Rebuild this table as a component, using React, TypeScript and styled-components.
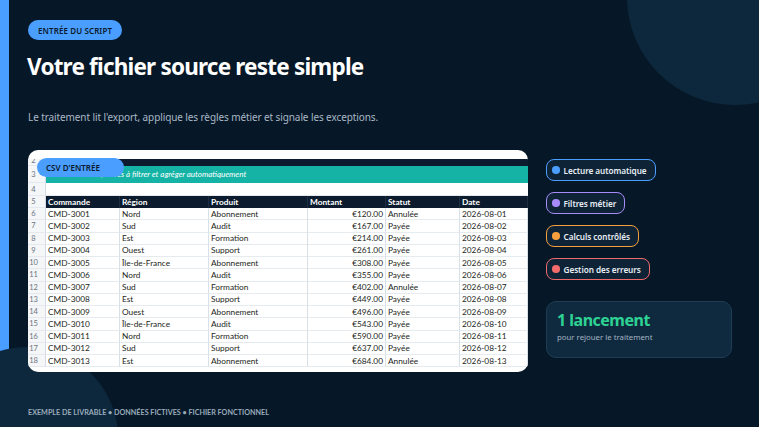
import React from "react";
import styled, { createGlobalStyle } from "styled-components";

const Global = createGlobalStyle`
  html, body { margin: 0; padding: 0; background: #061827; }
  * { box-sizing: border-box; }
`;

const Page = styled.div`
  position: relative;
  width: 759px;
  height: 427px;
  overflow: hidden;
  background: #061827;
  font-family: "Noto Sans", "Open Sans", sans-serif;
`;

const Bar = styled.div`
  position: absolute;
  left: 0;
  top: 0;
  width: 9px;
  height: 100%;
  background: #4a9eff;
`;

const Circle = styled.div<{ $x: number; $y: number; $r: number }>`
  position: absolute;
  left: ${(p) => p.$x - p.$r}px;
  top: ${(p) => p.$y - p.$r}px;
  width: ${(p) => p.$r * 2}px;
  height: ${(p) => p.$r * 2}px;
  border-radius: 50%;
  background: #0d283d;
`;

const Content = styled.div`
  position: relative;
  z-index: 1;
  display: flex;
  flex-direction: column;
  align-items: flex-start;
  padding: 20px 0 0 28px;
`;

const Badge = styled.div`
  height: 20px;
  padding: 0 10px;
  border-radius: 10px;
  background: #4a9eff;
  color: #0a1a2c;
  font-size: 8px;
  font-weight: 600;
  letter-spacing: 0.1px;
  display: flex;
  align-items: center;
`;

const Title = styled.h1`
  margin: 12px 0 0 -1px;
  font-size: 22.5px;
  line-height: 30px;
  font-weight: 700;
  color: #ffffff;
  letter-spacing: -0.8px;
`;

const Subtitle = styled.p`
  margin: 28px 0 0 0;
  font-size: 10px;
  line-height: 14px;
  color: #a9b7c6;
  letter-spacing: -0.1px;
`;

const Main = styled.div`
  margin-top: 26px;
  display: flex;
  gap: 18px;
  align-items: flex-start;
`;

const CardWrap = styled.div`
  position: relative;
`;

const Card = styled.div`
  width: 500px;
  height: 222px;
  background: #ffffff;
  border-radius: 10px;
  overflow: hidden;
  padding-top: 9px;
  font-family: Lato, "Liberation Sans", sans-serif;
`;

const CardBadge = styled.div`
  position: absolute;
  left: 9px;
  top: 8px;
  width: 87px;
  height: 19px;
  padding: 0 0 0 9px;
  border-radius: 10px;
  background: #4a9eff;
  color: #0a1a2c;
  font-family: "Noto Sans", sans-serif;
  font-size: 8px;
  font-weight: 600;
  display: flex;
  align-items: center;
`;

const COLS = "18px 74px 89px 99px 78px 74px 68px";

type Tone = "plain" | "dark" | "teal";

const Row = styled.div<{ $h: number }>`
  display: grid;
  grid-template-columns: ${COLS};
  height: ${(p) => p.$h}px;
`;

const Num = styled.div<{ $clip?: boolean }>`
  background: #f4f6f8;
  border-right: 1px solid #d3dbe4;
  border-bottom: 1px solid #e4e9ef;
  color: #6b7480;
  font-size: 7.5px;
  display: flex;
  align-items: ${(p) => (p.$clip ? "flex-end" : "center")};
  justify-content: center;
  padding-right: 6px;
  line-height: 9px;
  overflow: hidden;
`;

const Band = styled.div<{ $tone: Tone }>`
  grid-column: 2 / -1;
  background: ${(p) =>
    p.$tone === "teal" ? "#14b3a6" : p.$tone === "dark" ? "#0c1c2e" : "#ffffff"};
  border-bottom: 1px solid
    ${(p) => (p.$tone === "plain" ? "#e4e9ef" : "transparent")};
  color: #ffffff;
  font-style: italic;
  font-size: 8px;
  display: flex;
  align-items: center;
  padding-left: 2px;
  white-space: nowrap;
`;

const Cell = styled.div<{ $head?: boolean; $right?: boolean }>`
  background: ${(p) => (p.$head ? "#0c1c2e" : "#ffffff")};
  color: ${(p) => (p.$head ? "#ffffff" : "#1d1f22")};
  font-weight: ${(p) => (p.$head ? 700 : 400)};
  font-size: 8.3px;
  border-right: 1px solid ${(p) => (p.$head ? "#1d2e42" : "#d8e0e9")};
  border-bottom: 1px solid ${(p) => (p.$head ? "#0c1c2e" : "#e6ebf0")};
  display: flex;
  align-items: center;
  justify-content: ${(p) => (p.$right ? "flex-end" : "flex-start")};
  padding: 0 2px;
  white-space: nowrap;
  overflow: hidden;
`;

const Side = styled.div`
  padding-top: 9px;
  display: flex;
  flex-direction: column;
  align-items: flex-start;
  gap: 11px;
`;

const Pill = styled.div<{ $c: string }>`
  height: 22px;
  padding: 0 8px 0 5px;
  border: 1.5px solid ${(p) => p.$c};
  border-radius: 8px;
  background: #0f2336;
  display: flex;
  align-items: center;
  gap: 4px;
  color: #e8eef5;
  font-size: 8.2px;
  font-weight: 600;
  letter-spacing: -0.05px;
`;

const Dot = styled.span<{ $c: string }>`
  width: 7.5px;
  height: 7.5px;
  border-radius: 50%;
  background: ${(p) => p.$c};
`;

const Stat = styled.div`
  margin-top: 10px;
  width: 186px;
  height: 57px;
  border: 1px solid #1e3d55;
  border-radius: 10px;
  background: #0f2a3f;
  padding: 7px 10px;
`;

const StatValue = styled.div`
  font-size: 16px;
  line-height: 22px;
  font-weight: 700;
  color: #2ed394;
  letter-spacing: -0.5px;
`;

const StatLabel = styled.div`
  font-size: 7.8px;
  line-height: 12px;
  color: #a4b3c2;
`;

const Footer = styled.div`
  margin-top: 36px;
  font-family: Lato, "Liberation Sans", sans-serif;
  font-size: 7.2px;
  line-height: 10px;
  font-weight: 700;
  color: #9babbb;
`;

const regions = ["Nord", "Sud", "Est", "Ouest", "Île-de-France"];
const products = ["Abonnement", "Audit", "Formation", "Support"];
const cancelled = [0, 6, 12];

const data = Array.from({ length: 13 }, (_, i) => ({
  id: `CMD-${3001 + i}`,
  region: regions[i % 5],
  product: products[i % 4],
  amount: `€${(120 + 47 * i).toFixed(2)}`,
  status: cancelled.includes(i) ? "Annulée" : "Payée",
  date: `2026-08-${String(i + 1).padStart(2, "0")}`,
}));

const headers = ["Commande", "Région", "Produit", "Montant", "Statut", "Date"];

const pills = [
  { label: "Lecture automatique", c: "#4a9eff" },
  { label: "Filtres métier", c: "#a78bfa" },
  { label: "Calculs contrôlés", c: "#f5a03c" },
  { label: "Gestion des erreurs", c: "#f26b6b" },
];

export default function App() {
  return (
    <Page>
      <Global />
      <Bar />
      <Circle $x={735} $y={-3} $r={108} />
      <Circle $x={27} $y={438} $r={91} />
      <Content>
        <Badge>ENTRÉE DU SCRIPT</Badge>
        <Title>Votre fichier source reste simple</Title>
        <Subtitle>
          Le traitement lit l'export, applique les règles métier et signale les exceptions.
        </Subtitle>
        <Main>
          <CardWrap>
            <Card>
              <Row $h={7}>
                <Num $clip>2</Num>
                <Band $tone="dark" />
              </Row>
              <Row $h={17}>
                <Num>3</Num>
                <Band $tone="teal">
                  10 commandes fictives à filtrer et agréger automatiquement
                </Band>
              </Row>
              <Row $h={13}>
                <Num>4</Num>
                <Band $tone="plain" />
              </Row>
              <Row $h={12}>
                <Num>5</Num>
                {headers.map((h) => (
                  <Cell key={h} $head>
                    {h}
                  </Cell>
                ))}
              </Row>
              {data.map((d, i) => (
                <Row $h={12.25} key={d.id}>
                  <Num>{i + 6}</Num>
                  <Cell>{d.id}</Cell>
                  <Cell>{d.region}</Cell>
                  <Cell>{d.product}</Cell>
                  <Cell $right>{d.amount}</Cell>
                  <Cell>{d.status}</Cell>
                  <Cell>{d.date}</Cell>
                </Row>
              ))}
            </Card>
            <CardBadge>CSV D'ENTRÉE</CardBadge>
          </CardWrap>
          <Side>
            {pills.map((p) => (
              <Pill key={p.label} $c={p.c}>
                <Dot $c={p.c} />
                {p.label}
              </Pill>
            ))}
            <Stat>
              <StatValue>1 lancement</StatValue>
              <StatLabel>pour rejouer le traitement</StatLabel>
            </Stat>
          </Side>
        </Main>
        <Footer>EXEMPLE DE LIVRABLE • DONNÉES FICTIVES • FICHIER FONCTIONNEL</Footer>
      </Content>
    </Page>
  );
}
